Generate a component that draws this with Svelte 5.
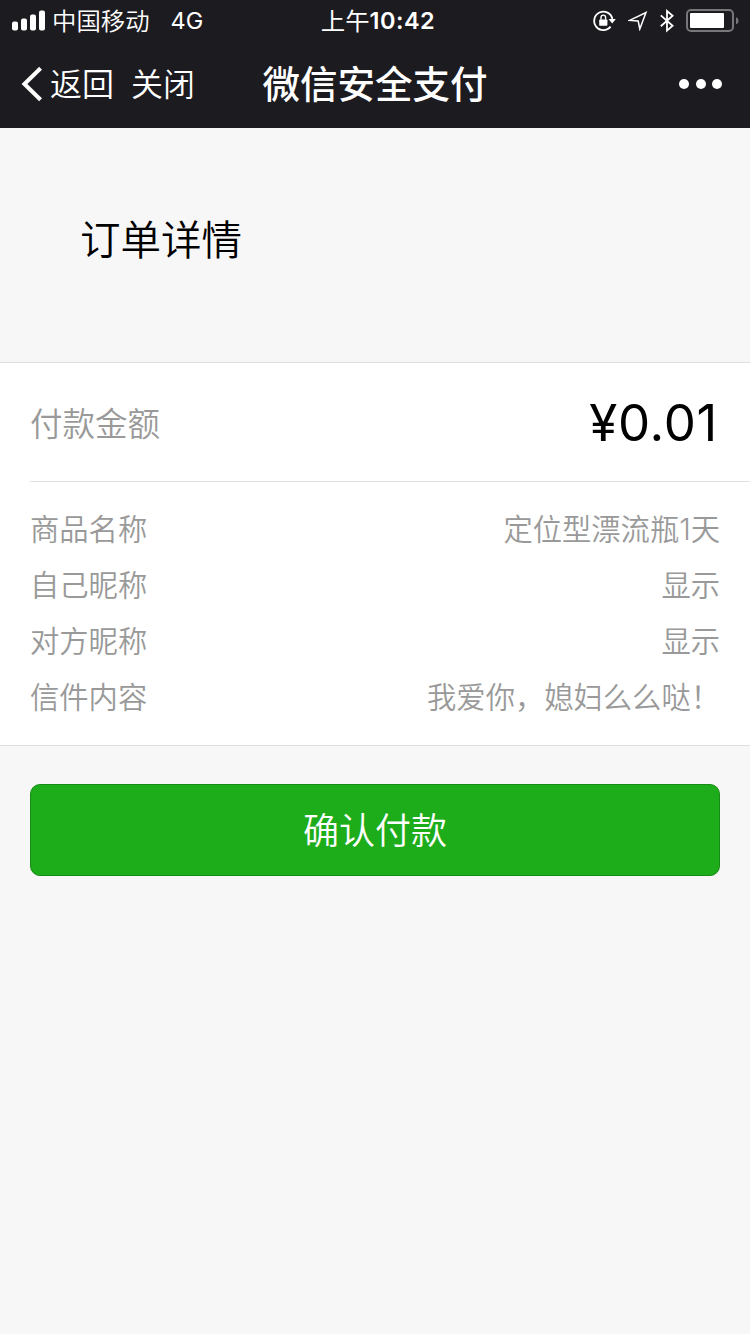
<script>
    const amount = '¥0.01';

    const details = [
        { label: '商品名称', value: '定位型漂流瓶1天' },
        { label: '自己昵称', value: '显示' },
        { label: '对方昵称', value: '显示' },
        { label: '信件内容', value: '我爱你，媳妇么么哒！' },
    ];
</script>

<div class="page">
    <header>
        <div class="status-bar">
            <div class="carrier">
                <svg width="34" height="24" viewBox="0 0 34 24" fill="#fff">
                    <rect x="0" y="12.5" width="6" height="9" rx="2" />
                    <rect x="9" y="9.5" width="6" height="12" rx="2" />
                    <rect x="18" y="5.5" width="6" height="16" rx="2" />
                    <rect x="27" y="1.5" width="6" height="20" rx="2" />
                </svg>
                <span class="operator">中国移动</span>
                <span class="network">4G</span>
            </div>
            <div class="time"><span>上午</span><b>10:42</b></div>
            <div class="indicators">
                <svg class="lock" width="24" height="24" viewBox="0 0 24 24" fill="none">
                    <path d="M18.6 17.6A9.2 9.2 0 1 1 20.4 10" stroke="#fff" stroke-width="1.8" />
                    <path d="M16.6 10h7.2l-3.6 4.4z" fill="#fff" />
                    <rect x="7.2" y="10.4" width="8.2" height="6.4" rx="0.8" fill="#fff" />
                    <path d="M9 10.8V8.4a2.3 2.3 0 0 1 4.6 0v2.4" stroke="#fff" stroke-width="1.4" />
                </svg>
                <svg class="location" width="20" height="20" viewBox="0 0 20 20" fill="none">
                    <path d="M1.6 9.4 18 1.6 11.8 18 10.2 10z" stroke="#fff" stroke-width="1.5" />
                </svg>
                <svg class="bluetooth" width="14" height="24" viewBox="0 0 14 24" fill="none">
                    <path d="M.8 6.4 12.6 16.8 7 21.6V2l5.6 4.8L.8 17.2" stroke="#fff" stroke-width="1.8" />
                </svg>
                <svg class="battery" width="54" height="24" viewBox="0 0 54 24" fill="none">
                    <rect x="1" y="1" width="46" height="21" rx="4" stroke="#77777a" stroke-width="2" />
                    <rect x="4" y="4" width="34" height="15" rx="1" fill="#fff" />
                    <path d="M50 8.2c3.4 1 3.4 6 0 7z" fill="#77777a" />
                </svg>
            </div>
        </div>

        <nav>
            <div class="nav-left">
                <svg width="24" height="36" viewBox="0 0 24 36" fill="none">
                    <path d="M21.6 2.2 5.4 18l16.2 15.8" stroke="#fff" stroke-width="4" />
                </svg>
                <span class="back">返回</span>
                <span>关闭</span>
            </div>
            <h1>微信安全支付</h1>
            <div class="more"><i></i><i></i><i></i></div>
        </nav>
    </header>

    <h2>订单详情</h2>

    <section>
        <div class="amount">
            <span class="amount-label">付款金额</span>
            <span class="amount-value">{amount}</span>
        </div>
        <div class="details">
            {#each details as row}
                <div class="row">
                    <span>{row.label}</span>
                    <span>{row.value}</span>
                </div>
            {/each}
        </div>
    </section>

    <button>确认付款</button>
</div>

<style>
    :global(body) {
        background: #f7f7f7;
    }

    .page {
        min-height: 1334px;
        background: #f7f7f7;
        font-family: 'Noto Sans CJK SC', sans-serif;
        font-weight: 350;
        white-space: nowrap;
    }

    svg {
        display: block;
        flex: none;
    }

    header {
        height: 128px;
        background: #1c1b1f;
        color: #fff;
    }

    .status-bar {
        display: grid;
        grid-template-columns: 1fr auto 1fr;
        align-items: center;
        height: 41px;
        padding: 0 10px 0 12px;
        font-size: 24.4px;
        line-height: 38px;
    }

    .carrier {
        display: flex;
        align-items: center;
    }

    .operator {
        margin-left: 6px;
        padding-bottom: 2px;
    }

    .network {
        margin-left: 21px;
        font-family: Inter, sans-serif;
        font-weight: 400;
        font-size: 23.5px;
    }

    .time {
        display: flex;
        margin-left: 4px;
    }

    .time span {
        padding-bottom: 2px;
        font-weight: 400;
    }

    .time b {
        margin-top: 1px;
        font-family: Inter, sans-serif;
        font-weight: 600;
        font-size: 23.5px;
        letter-spacing: 0.5px;
    }

    .indicators {
        display: flex;
        justify-content: flex-end;
        align-items: center;
    }

    .location {
        margin-left: 12px;
    }

    .bluetooth {
        margin-left: 12px;
    }

    .battery {
        margin-left: 12px;
    }

    nav {
        display: grid;
        grid-template-columns: 1fr auto 1fr;
        align-items: center;
        height: 86px;
        padding: 0 28px 0 19px;
    }

    .nav-left {
        display: flex;
        align-items: center;
        font-size: 32px;
        line-height: 40px;
    }

    .nav-left span {
        padding-bottom: 4px;
    }

    .back {
        margin: 0 17px 0 7px;
    }

    h1 {
        margin: 0;
        padding: 0 0 5px 9px;
        font-size: 37.5px;
        font-weight: 500;
        line-height: 50px;
    }

    .more {
        display: flex;
        justify-content: flex-end;
        gap: 6.5px;
    }

    .more i {
        width: 10px;
        height: 10px;
        border-radius: 50%;
        background: #fff;
    }

    h2 {
        height: 234px;
        margin: 0;
        padding: 0 80px;
        box-sizing: border-box;
        font-size: 40.5px;
        font-weight: 350;
        line-height: 220px;
        color: #000;
    }

    section {
        border-top: 1px solid #dfdfdf;
        border-bottom: 1px solid #dfdfdf;
        background: #fff;
        color: #999;
    }

    .amount {
        display: flex;
        justify-content: space-between;
        align-items: center;
        height: 118px;
        margin-left: 30px;
        padding-right: 32px;
        border-bottom: 1px solid #e2e2e2;
    }

    .amount-label {
        padding-bottom: 2px;
        font-size: 32.5px;
    }

    .amount-value {
        font-family: Inter, sans-serif;
        font-weight: 400;
        font-size: 51px;
        letter-spacing: 0.7px;
        color: #000;
    }

    .details {
        padding: 20px 30px 19px;
    }

    .row {
        display: flex;
        justify-content: space-between;
        height: 56px;
        font-family: Inter, 'Noto Sans CJK SC', sans-serif;
        font-size: 29.3px;
        line-height: 56px;
    }

    button {
        display: block;
        width: 690px;
        height: 92px;
        margin: 38px auto 0;
        padding: 0 0 4px;
        border: 1px solid #178a17;
        border-radius: 10px;
        background: #1dad1b;
        color: #fff;
        font-family: inherit;
        font-size: 36px;
        font-weight: 350;
    }
</style>
